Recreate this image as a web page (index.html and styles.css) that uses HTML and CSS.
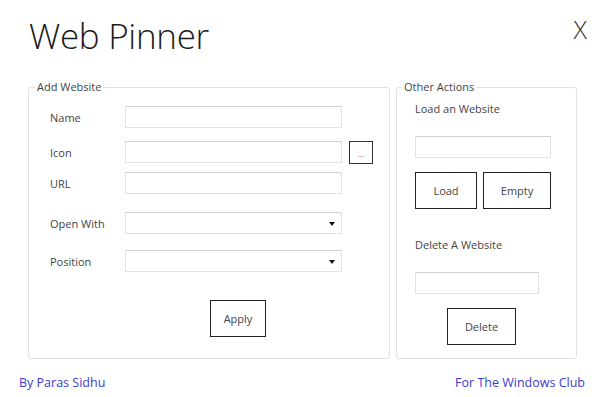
FILE: index.html
```html
<!DOCTYPE html>
<html lang="en">
<head>
    <meta charset="UTF-8">
    <title>Web Pinner</title>
    <link rel="stylesheet" href="styles.css">
</head>
<body>
    <div id="window">
        <div id="titlebar">
            <h1>Web Pinner</h1>
            <span id="close">X</span>
        </div>
        <div id="groups">
            <fieldset class="group" id="add">
                <legend>Add Website</legend>
                <div class="row">
                    <label>Name</label>
                    <input type="text">
                </div>
                <div class="row row-icon">
                    <label>Icon</label>
                    <input type="text">
                    <button class="btn browse">...</button>
                </div>
                <div class="row row-url">
                    <label>URL</label>
                    <input type="text">
                </div>
                <div class="row row-open">
                    <label>Open With</label>
                    <div class="select"><span class="caret"></span></div>
                </div>
                <div class="row row-pos">
                    <label>Position</label>
                    <div class="select"><span class="caret"></span></div>
                </div>
                <button class="btn apply">Apply</button>
            </fieldset>
            <fieldset class="group" id="other">
                <legend>Other Actions</legend>
                <p class="caption">Load an Website</p>
                <input type="text" class="load-input">
                <div class="btn-row">
                    <button class="btn load">Load</button>
                    <button class="btn empty">Empty</button>
                </div>
                <p class="caption caption-del">Delete A Website</p>
                <input type="text" class="del-input">
                <button class="btn delete">Delete</button>
            </fieldset>
        </div>
        <div id="footer">
            <span>By Paras Sidhu</span>
            <span>For The Windows Club</span>
        </div>
    </div>
</body>
</html>
```

FILE: styles.css
```css
*{
    margin: 0;
    padding: 0;
    box-sizing: border-box;
}
body{
    background: #fff;
    font-family: "Open Sans", "DejaVu Sans", sans-serif;
    color: #333;
}
#window{
    width: 600px;
    height: 397px;
    display: flex;
    flex-direction: column;
}
#titlebar{
    height: 80px;
    display: flex;
    justify-content: space-between;
    padding: 14px 13px 0 29px;
}
#titlebar h1{
    font-size: 35px;
    font-weight: 300;
    line-height: 44px;
    color: #1a1a1a;
    letter-spacing: -0.3px;
}
#close{
    font-size: 25px;
    font-weight: 300;
    line-height: 26px;
    margin-top: 2px;
    color: #333;
}
#groups{
    height: 279px;
    display: flex;
    gap: 6px;
    padding-left: 28px;
}
.group{
    border: 1px solid #dbe1e5;
    border-radius: 3px;
    height: 279px;
}
.group legend{
    font-size: 11px;
    line-height: 14px;
    padding: 0 2px;
    color: #444;
}
#add legend{
    margin-left: -15px;
}
#other legend{
    margin-left: -13px;
}
#add{
    width: 362px;
    padding: 12px 0 0 21px;
}
#other{
    width: 181px;
    padding: 7px 0 0 18px;
}
.row{
    display: flex;
    align-items: center;
    height: 22px;
}
.row label{
    width: 75px;
    font-size: 11px;
    color: #444;
}
.row-icon{ margin-top: 13px; }
.row-url{ margin-top: 9px; }
.row-open{ margin-top: 18px; }
.row-pos{ margin-top: 16px; }
input[type=text], .select{
    width: 217px;
    height: 22px;
    border: 1px solid #e3e3e3;
    border-top-color: #d2d2d2;
    background: #fff;
    outline: none;
}
.select{
    position: relative;
}
.caret{
    position: absolute;
    right: 6px;
    top: 9px;
    border-left: 3px solid transparent;
    border-right: 3px solid transparent;
    border-top: 4px solid #111;
}
.btn{
    display: block;
    background: #fff;
    border: 1px solid #222;
    font-family: "Open Sans", "DejaVu Sans", sans-serif;
    font-size: 11px;
    color: #444;
    height: 37px;
}
.browse{
    width: 24px;
    height: 23px;
    margin-left: 7px;
    border-color: #333;
    font-size: 9px;
    color: #888;
    line-height: 10px;
    padding-top: 4px;
}
.apply{
    width: 56px;
    margin: 28px 0 0 160px;
}
.caption{
    font-size: 11px;
    line-height: 16px;
    color: #444;
}
.caption-del{
    margin-top: 28px;
}
.load-input{
    display: block;
    margin-top: 19px;
    width: 136px !important;
}
.del-input{
    display: block;
    margin-top: 19px;
    width: 124px !important;
}
.btn-row{
    display: flex;
    gap: 6px;
    margin-top: 14px;
}
.load{
    width: 62px;
}
.empty{
    width: 68px;
}
.delete{
    width: 69px;
    margin: 14px 0 0 32px;
}
#footer{
    display: flex;
    justify-content: space-between;
    padding: 16px 15px 0 19px;
    font-size: 12.5px;
    line-height: 16px;
    color: #3b3bcc;
}
```
